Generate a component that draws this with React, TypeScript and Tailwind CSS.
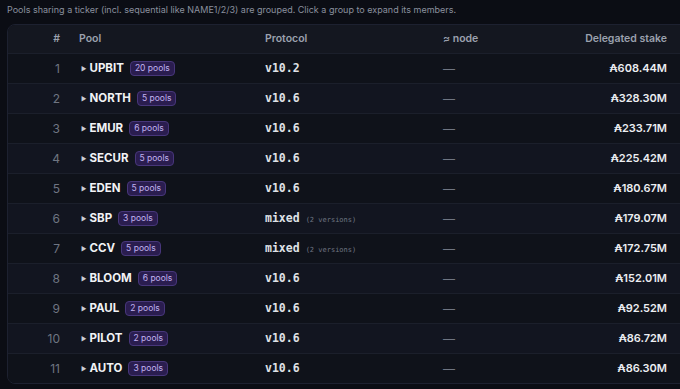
const rows = [
  { n: 1, t: "UPBIT", c: 20, p: "v10.2", s: "608.44M" },
  { n: 2, t: "NORTH", c: 5, p: "v10.6", s: "328.30M" },
  { n: 3, t: "EMUR", c: 6, p: "v10.6", s: "233.71M" },
  { n: 4, t: "SECUR", c: 5, p: "v10.6", s: "225.42M" },
  { n: 5, t: "EDEN", c: 5, p: "v10.6", s: "180.67M" },
  { n: 6, t: "SBP", c: 3, p: "mixed", s: "179.07M" },
  { n: 7, t: "CCV", c: 5, p: "mixed", s: "172.75M" },
  { n: 8, t: "BLOOM", c: 6, p: "v10.6", s: "152.01M" },
  { n: 9, t: "PAUL", c: 2, p: "v10.6", s: "92.52M" },
  { n: 10, t: "PILOT", c: 2, p: "v10.6", s: "86.72M" },
  { n: 11, t: "AUTO", c: 3, p: "v10.6", s: "86.30M" },
];

const mono = "font-['DejaVu_Sans_Mono',monospace]";

export default function App() {
  return (
    <div className="w-[680px] h-[389px] overflow-hidden bg-[#0b0d14] font-['Inter','Liberation_Sans',sans-serif]">
      <p className="pl-[7px] pt-[3px] text-[9px] leading-[14px] text-[#8a909e]">
        Pools sharing a ticker (incl. sequential like NAME1/2/3) are grouped. Click a group to expand its members.
      </p>

      <div className="mt-[7px] ml-[7px] w-[690px] rounded-lg border border-[#1d2130] bg-[#0e1018] overflow-hidden">
        {/* header */}
        <div className="flex h-[28px] items-center bg-[#141720] text-[10.5px] font-semibold text-[#9ba1ae]">
          <div className="w-[60px] pr-2 text-right">#</div>
          <div className="w-[185px] pl-[11px]">Pool</div>
          <div className="w-[178px] pl-[12px]">Protocol</div>
          <div className="w-[125px] pl-[12px]">≈ node</div>
          <div className="w-[111px] text-right">Delegated stake</div>
        </div>

        {rows.map((r, i) => (
          <div
            key={r.n}
            className={`flex h-[30px] items-center border-t border-[#1b1f2b] ${i % 2 === 0 ? "bg-[#0f121a]" : "bg-[#121520]"}`}
          >
            <div className="w-[60px] pr-2 text-right text-[12px] text-[#6f7582]">{r.n}</div>
            <div className="w-[185px] pl-[13px] flex items-center">
              <span className="text-[6px] text-[#c9ccd3] mr-[3px]">▶</span>
              <span className="text-[11.5px] font-bold text-[#f1f2f5]">{r.t}</span>
              <span className="ml-[6px] rounded-[4px] border border-[#47367a] bg-[#2a1d4f] px-[4px] h-[15px] leading-[13px] text-[8.5px] text-[#c2b3f0]">
                {r.c} pools
              </span>
            </div>
            <div className="w-[178px] pl-[12px] flex items-baseline">
              <span className={`${mono} text-[11.5px] font-semibold text-[#dfe1e6]`}>{r.p}</span>
              {r.p === "mixed" && (
                <span className={`${mono} ml-[6px] text-[7px] text-[#6f7582]`}>(2 versions)</span>
              )}
            </div>
            <div className="w-[125px] pl-[12px] text-[12px] text-[#6f7582]">—</div>
            <div className="w-[111px] text-right text-[11px] font-semibold text-[#eceef2]">₳{r.s}</div>
          </div>
        ))}
      </div>
    </div>
  );
}
